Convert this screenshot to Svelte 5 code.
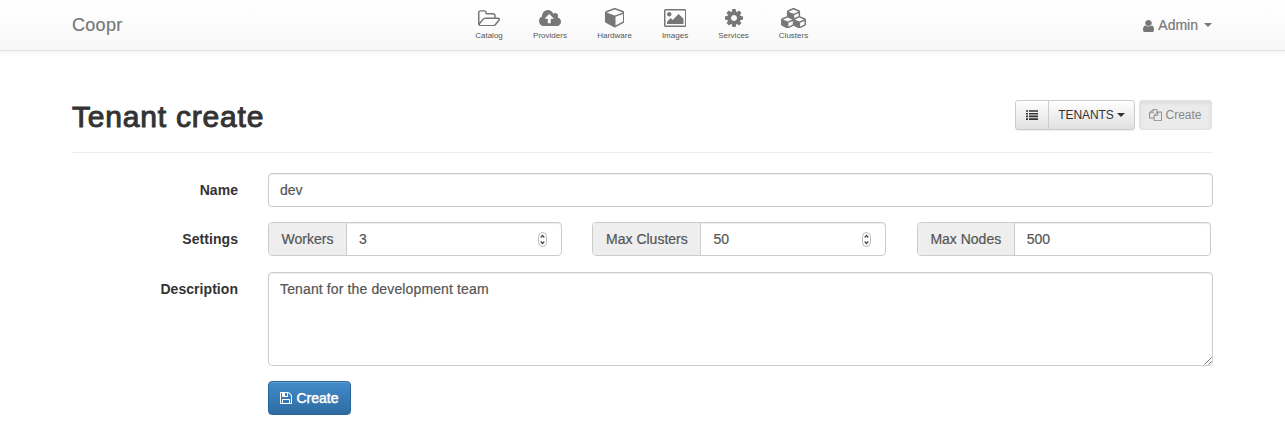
<script>
  const nav = [
    { label: 'Catalog', w: 22, h: 16.5, box: '64 128 1909 1408', d: 'M1845 931q0-35-53-35h-1088q-40 0-85.5 21.5t-71.5 52.5l-294 363q-18 24-18 40 0 35 53 35h1088q40 0 86-22t71-53l294-363q18-22 18-39zm-1141-163h768v-160q0-40-28-68t-68-28h-576q-40 0-68-28t-28-68v-64q0-40-28-68t-68-28h-320q-40 0-68 28t-28 68v853l256-315q44-53 116-87.5t140-34.5zm1269 163q0 62-46 120l-295 363q-43 53-116 87.5t-140 34.5h-1088q-92 0-158-66t-66-158v-960q0-92 66-158t158-66h320q92 0 158 66t66 158v32h544q92 0 158 66t66 158v160h192q54 0 99 24.5t67 70.5q15 32 15 68z' },
    { label: 'Providers', w: 22, h: 16.2, box: '-64 128 1920 1408', d: 'M1216 864q0-14-9-23l-352-352q-9-9-23-9t-23 9l-351 351q-10 12-10 24 0 14 9 23t23 9h224v352q0 13 9.5 22.5t22.5 9.5h192q13 0 22.5-9.5t9.5-22.5v-352h224q13 0 22.5-9.5t9.5-22.5zm640 288q0 159-112.5 271.5t-271.5 112.5h-1088q-185 0-316.5-131.5t-131.5-316.5q0-130 70-240t188-165q-2-30-2-43 0-212 150-362t362-150q156 0 285.5 87t188.5 231q71-62 166-62 106 0 181 75t75 181q0 76-41 138 130 31 213.5 135.5t83.5 238.5z' },
    { label: 'Hardware', w: 19.5, h: 19.5, box: '0 128 1664 1664', d: 'M896 1629l640-349v-636l-640 233v752zm-64-865l698-254-698-254-698 254zm832-252v768q0 35-18 65t-49 47l-704 384q-28 16-61 16t-61-16l-704-384q-31-17-49-47t-18-65v-768q0-40 23-73t61-47l704-256q22-8 44-8t44 8l704 256q38 14 61 47t23 73z' },
    { label: 'Images', w: 22.5, h: 18, box: '-64 128 1920 1536', d: 'M576 576q0 80-56 136t-136 56-136-56-56-136 56-136 136-56 136 56 56 136zm1024 384v448h-1408v-192l320-320 160 160 512-512zm96-704h-1600q-13 0-22.5 9.5t-9.5 22.5v1216q0 13 9.5 22.5t22.5 9.5h1600q13 0 22.5-9.5t9.5-22.5v-1216q0-13-9.5-22.5t-22.5-9.5zm160 32v1216q0 66-47 113t-113 47h-1600q-66 0-113-47t-47-113v-1216q0-66 47-113t113-47h1600q66 0 113 47t47 113z' },
    { label: 'Services', w: 18, h: 18, box: '128 128 1536 1536', d: 'M1152 896q0-106-75-181t-181-75-181 75-75 181 75 181 181 75 181-75 75-181zm512-109v222q0 12-8 23t-20 13l-185 28q-19 54-39 91 35 50 107 138 10 12 10 25t-9 23q-27 37-99 108t-94 71q-12 0-26-9l-138-108q-44 23-91 38-16 136-29 186-7 28-36 28h-222q-14 0-24.5-8.5t-11.5-21.5l-28-184q-49-16-90-37l-141 107q-10 9-25 9-14 0-25-11-126-114-165-168-7-10-7-23 0-12 8-23 15-21 51-66.5t54-70.5q-27-50-41-99l-183-27q-13-2-21-12.5t-8-23.5v-222q0-12 8-23t19-13l186-28q14-46 39-92-40-57-107-138-10-12-10-24 0-10 9-23 26-36 98.5-107.5t94.5-71.5q13 0 26 10l138 107q44-23 91-38 16-136 29-186 7-28 36-28h222q14 0 24.5 8.5t11.5 21.5l28 184q49 16 90 37l142-107q9-9 24-9 13 0 25 10 129 119 165 170 7 8 7 22 0 12-8 23-15 21-51 66.5t-54 70.5q26 50 41 98l183 28q13 2 21 12.5t8 23.5z' },
    { label: 'Clusters', w: 25, h: 20.5, box: '0 0 2176 1792', d: 'M640 1632l384-192v-314l-384 164v342zm-64-454l404-173-404-173-404 173zm1088 454l384-192v-314l-384 164v342zm-64-454l404-173-404-173-404 173zm-448-293l384-165v-266l-384 164v267zm-64-379l441-189-441-189-441 189zm1088 518v416q0 36-19 67t-52 47l-448 224q-25 14-57 14t-57-14l-448-224q-5-2-7-4-2 2-7 4l-448 224q-25 14-57 14t-57-14l-448-224q-33-16-52-47t-19-67v-416q0-38 21.5-70t56.5-48l434-186v-400q0-38 21.5-70t56.5-48l448-192q23-10 50-10t50 10l448 192q35 16 56.5 48t21.5 70v400l434 186q36 16 57 48t21 70z' }
  ];
  const settings = [
    { label: 'Workers', value: '3', addon: 78, spin: true },
    { label: 'Max Clusters', value: '50', addon: 108, spin: true },
    { label: 'Max Nodes', value: '500', addon: 97, spin: false }
  ];
  let description = 'Tenant for the development team';
</script>

<header>
  <div class="container bar">
    <a class="brand" href="#home">Coopr</a>
    <nav>
      {#each nav as item}
        <a class="item" href="#nav">
          <span class="glyph"><svg width={item.w} height={item.h} viewBox={item.box}><path d={item.d} /></svg></span>
          <span class="caption">{item.label}</span>
        </a>
      {/each}
    </nav>
    <a class="admin" href="#admin">
      <svg width="11" height="12" viewBox="256 128 1280 1536" preserveAspectRatio="none"><path d="M1536 1399q0 109-62.5 187t-150.5 78h-854q-88 0-150.5-78t-62.5-187q0-85 8.5-160.5t31.5-152 58.5-131 94-89 134.5-34.5q131 128 313 128t313-128q76 0 134.5 34.5t94 89 58.5 131 31.5 152 8.5 160.5zm-256-887q0 159-112.5 271.5t-271.5 112.5-271.5-112.5-112.5-271.5 112.5-271.5 271.5-112.5 271.5 112.5 112.5 271.5z" /></svg>
      <span>Admin</span>
      <i class="caret"></i>
    </a>
  </div>
</header>

<main class="container">
  <div class="heading">
    <h1>Tenant create</h1>
    <div class="tools">
      <div class="group">
        <button class="list" aria-label="List">
          <svg width="12" height="10" viewBox="0 0 12 10"><path d="M0 .2h2v1.6H0zM3 .2h9v1.6H3zM0 2.9h2v1.6H0zM3 2.9h9v1.6H3zM0 5.6h2v1.6H0zM3 5.6h9v1.6H3zM0 8.3h2v1.6H0zM3 8.3h9v1.6H3z" /></svg>
        </button>
        <button class="tenants"><span>TENANTS</span><i class="caret"></i></button>
      </div>
      <button class="current">
        <svg width="13" height="12" viewBox="0 0 1792 1792" preserveAspectRatio="none"><path d="M1696 384q40 0 68 28t28 68v1216q0 40-28 68t-68 28h-960q-40 0-68-28t-28-68v-288h-544q-40 0-68-28t-28-68v-672q0-40 20-88t48-76l408-408q28-28 76-48t88-20h416q40 0 68 28t28 68v328q68-40 128-40h416zm-544 213l-299 299h299v-299zm-640-384l-299 299h299v-299zm196 647l316-316v-416h-384v416q0 40-28 68t-68 28h-416v640h512v-256q0-40 20-88t48-76zm956 804v-1152h-384v416q0 40-28 68t-68 28h-416v640h896z" /></svg>
        <span>Create</span>
      </button>
    </div>
  </div>

  <form>
    <label for="name">Name</label>
    <input id="name" class="control" value="dev" />

    <label for="set-0">Settings</label>
    <div class="settings">
      {#each settings as s, i}
        <div class="input-group">
          <span class="addon" style:width="{s.addon}px">{s.label}</span>
          <input id="set-{i}" value={s.value} />
          {#if s.spin}
            <svg class="spin" width="9" height="15" viewBox="0 0 9 15"><rect x=".5" y=".5" width="8" height="14" rx="4" /><path d="M2.7 5.5L4.5 3.5L6.3 5.5M2.7 9.5L4.5 11.5L6.3 9.5" /></svg>
          {/if}
        </div>
      {/each}
    </div>

    <label class="lower" for="desc">Description</label>
    <div class="area">
      <textarea id="desc" class="control" bind:value={description}></textarea>
      <svg class="grip" width="8" height="8" viewBox="0 0 8 8"><path d="M.5 7.5L7.5 .5M4.5 7.5L7.5 4.5" /></svg>
    </div>

    <button class="submit" type="button">
      <svg width="12" height="12" viewBox="128 128 1536 1536"><path d="M512 1536h768v-384h-768v384zm896 0h128v-896q0-14-10-38.5t-20-34.5l-281-281q-10-10-34-20t-39-10v416q0 40-28 68t-68 28h-576q-40 0-68-28t-28-68v-416h-128v1280h128v-416q0-40 28-68t68-28h832q40 0 68 28t28 68v416zm-384-928v-320q0-13-9.5-22.5t-22.5-9.5h-192q-13 0-22.5 9.5t-9.5 22.5v320q0 13 9.5 22.5t22.5 9.5h192q13 0 22.5-9.5t9.5-22.5zm640 32v928q0 40-28 68t-68 28h-1344q-40 0-68-28t-28-68v-1344q0-40 28-68t68-28h928q40 0 88 20t76 48l280 280q28 28 48 76t20 88z" /></svg>
      <span>Create</span>
    </button>
  </form>
</main>

<style>
  :global(body) { background: #fff; font: 14px/20px "Liberation Sans", Arial, sans-serif; color: #333; }
  * { box-sizing: border-box; }
  a { color: #777; text-decoration: none; }
  svg { fill: currentColor; display: block; flex: none; }
  button, input, textarea { font: inherit; color: inherit; margin: 0; }
  input, textarea { outline: 0; }
  .container { width: 1141px; margin-left: 72px; }
  header { height: 51px; border-bottom: 1px solid #e2e2e2; background: linear-gradient(#fff, #f8f8f8); box-shadow: 0 1px 5px rgba(0, 0, 0, .075); }
  .bar { display: flex; height: 50px; }
  .brand { width: 403px; font-size: 18px; line-height: 50px; letter-spacing: .3px; -webkit-text-stroke: .2px #777; }
  nav { display: grid; grid-template-columns: 28px 34px 35px 26px 31px 29px; column-gap: 30px; }
  .item { display: flex; flex-direction: column; align-items: center; }
  .glyph { display: flex; align-items: center; justify-content: center; height: 20px; margin-top: 8px; }
  .caption { font-size: 8px; line-height: 10px; margin-top: 3px; white-space: nowrap; color: #555; }
  .admin { display: flex; align-items: center; margin-left: auto; padding-right: 1px; -webkit-text-stroke: .2px #777; }
  .admin span { margin: 0 6px 0 4px; }
  .admin svg { margin-top: 1px; }
  .caret { width: 0; height: 0; border: 4px solid transparent; border-top-color: currentColor; border-bottom: 0; }
  .heading { display: flex; justify-content: space-between; height: 102px; border-bottom: 1px solid #eee; padding: 49px 1px 0 0; }
  h1 { margin: 0; font-size: 30px; line-height: 33px; font-weight: 400; -webkit-text-stroke: 1px #333; letter-spacing: .8px; }
  .tools { display: flex; gap: 4px; }
  .group { display: flex; height: 30px; border: 1px solid #ccc; border-radius: 3px; background: linear-gradient(#fff, #e0e0e0); box-shadow: 0 1px 1px rgba(0, 0, 0, .075); }
  .tools button { display: flex; align-items: center; font-size: 12px; padding: 0; }
  .group button { border: 0; background: none; justify-content: center; }
  .group .list { width: 32px; }
  .group .tenants { width: 86px; border-left: 1px solid #ccc; gap: 3px; letter-spacing: -.1px; }
  .tools .current { width: 73px; height: 30px; border: 1px solid #e2e2e2; border-radius: 3px; background: #ebebeb; box-shadow: inset 0 2px 4px rgba(0, 0, 0, .07); color: #888; justify-content: center; gap: 3px; }
  form { display: grid; grid-template-columns: 166px 945px; column-gap: 30px; row-gap: 15px; padding-top: 20px; justify-items: start; }
  label { font-weight: 700; line-height: 34px; justify-self: end; letter-spacing: .05px; }
  .lower { padding-top: 1px; }
  .control, .input-group { border: 1px solid #ccc; border-radius: 4px; background: #fff; box-shadow: inset 0 1px 1px rgba(0, 0, 0, .075); color: #555; }
  .control { display: block; width: 945px; height: 34px; padding: 6px 11px; }
  input, textarea, .addon { -webkit-text-stroke: .2px #555; }
  .settings { display: flex; gap: 30.4px; }
  .input-group { display: flex; align-items: center; width: 294px; height: 34px; overflow: hidden; }
  .addon { flex: none; height: 32px; line-height: 32px; text-align: center; background: #eee; border-right: 1px solid #ccc; }
  .input-group input { flex: 1; min-width: 0; border: 0; padding: 0 12px; background: none; }
  .spin { margin-right: 14px; fill: #fff; stroke: #bbb; }
  .spin path { fill: none; stroke: #444; stroke-width: 1.2; }
  .area { position: relative; padding-top: 1px; }
  textarea.control { height: 94px; resize: none; letter-spacing: .13px; }
  .grip { position: absolute; right: 1px; bottom: 1px; fill: none; stroke: #777; }
  .submit { grid-column: 2; display: flex; align-items: center; justify-content: center; gap: 4px; width: 83px; height: 34px; padding: 0; border: 1px solid #2b669a; border-radius: 4px; background: linear-gradient(#428bca, #2d6ca2); color: #fff; box-shadow: inset 0 1px rgba(255, 255, 255, .15), 0 1px 1px rgba(0, 0, 0, .075); text-shadow: 0 -1px 0 rgba(0, 0, 0, .2); }
  .submit span { -webkit-text-stroke: .5px #fff; }
</style>
